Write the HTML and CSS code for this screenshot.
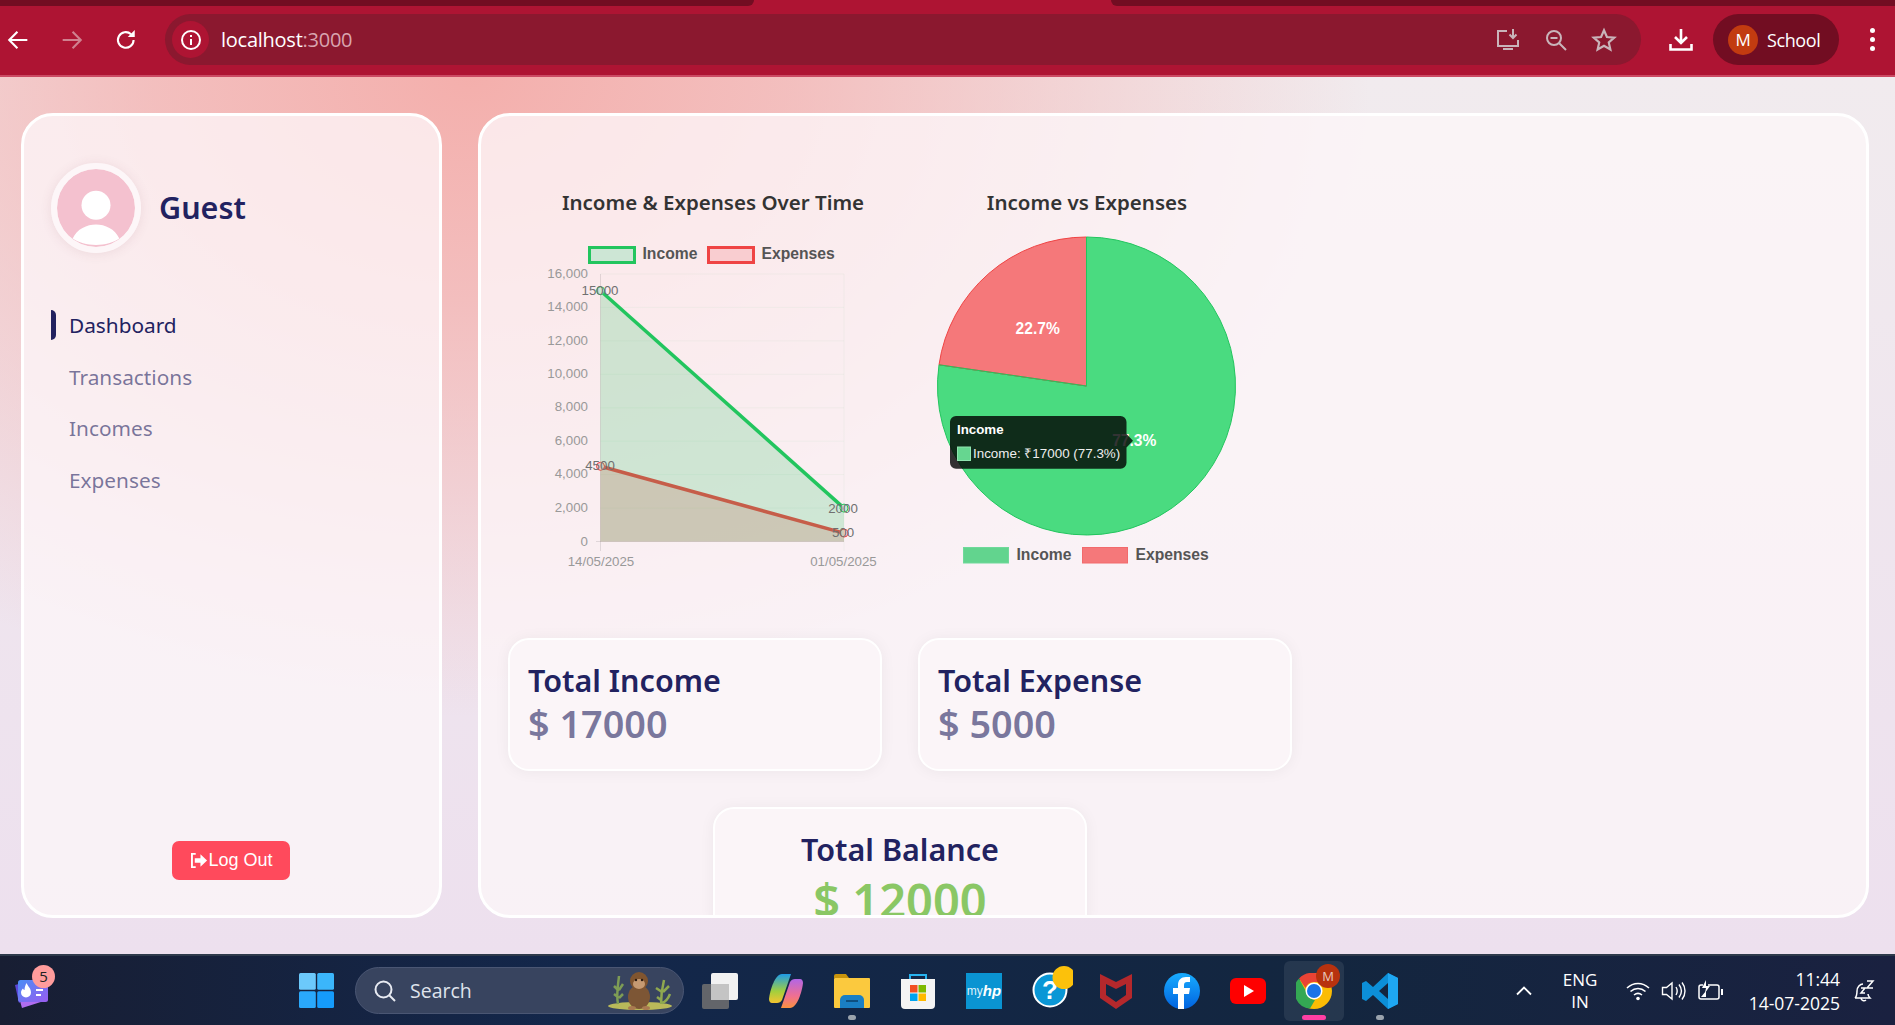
FILE: index.html
```html
<!DOCTYPE html>
<html lang="en">
<head>
    <meta charset="UTF-8">
    <meta name="viewport" content="width=device-width, initial-scale=1.0">
    <title>Dashboard</title>
    <link rel="stylesheet" href="styles.css">
</head>
<body>
    <!-- Browser bar -->
    <div class="tab-strip"><div class="tab-left"></div><div class="tab-right"></div></div>
    <header class="toolbar">
        <svg class="nav-btn" viewBox="0 0 24 24"><path d="M20 12H5M11.500 5L4.500 12l7 7" fill="none" stroke="#fff" stroke-width="1.800"/></svg>
        <svg class="nav-btn" viewBox="0 0 24 24"><path d="M4 12h15M12.500 5l7 7-7 7" fill="none" stroke="#d0808f" stroke-width="1.800"/></svg>
        <svg class="nav-btn" viewBox="0 0 24 24"><path d="M18.500 12a6.700 6.700 0 1 1-2.200-5" fill="none" stroke="#fff" stroke-width="1.800"/><path d="M19.500 3.500v6h-6z" fill="#fff"/></svg>
        <div class="omnibox">
            <span class="site-info">
                <svg viewBox="0 0 24 24" width="24" height="24"><circle cx="12" cy="12" r="9" fill="none" stroke="#fff" stroke-width="2"/><path d="M12 11v6M12 7v2" stroke="#fff" stroke-width="2"/></svg>
            </span>
            <span class="url">localhost<span class="url-port">:3000</span></span>
            <span class="omni-icons">
                <svg viewBox="0 0 26 26" width="26" height="26"><path d="M12 4H3v15h20v-6" fill="none" stroke="#c9b4ba" stroke-width="2"/><path d="M8 21h10v2H8z" fill="#c9b4ba"/><path d="M18 2v8M14.500 7.500l3.500 3.500 3.500-3.500" fill="none" stroke="#c9b4ba" stroke-width="2"/></svg>
                <svg viewBox="0 0 24 24" width="24" height="24"><circle cx="10" cy="10" r="7" fill="none" stroke="#c9b4ba" stroke-width="2"/><path d="M6.500 10h7M15 15l7 7" stroke="#c9b4ba" stroke-width="2"/></svg>
                <svg viewBox="0 0 24 24" width="26" height="26"><path d="M12 3l2.700 6.200 6.800.6-5.100 4.400 1.500 6.600L12 17.300l-5.900 3.500 1.500-6.600-5.100-4.400 6.800-.6z" fill="none" stroke="#c9b4ba" stroke-width="2"/></svg>
            </span>
        </div>
        <svg class="download-btn" viewBox="0 0 24 24"><path d="M12 1v13M6 9l6 6 6-6" fill="none" stroke="#fff" stroke-width="2.600"/><path d="M1.500 16v5.500h21V16" fill="none" stroke="#fff" stroke-width="2.600"/></svg>
        <div class="profile"><span class="profile-pic">M</span><span>School</span></div>
        <div class="menu-dots"><i></i><i></i><i></i></div>
    </header>

    <main class="page">
        <aside class="sidebar">
            <div class="user">
                <div class="avatar">
                    <svg viewBox="0 0 78 78"><circle cx="39" cy="39" r="39" fill="#f4c1cf"/><circle cx="39" cy="36.300" r="14.500" fill="#fff"/><path d="M15.700 69.600C20 60 30 55.600 39 55.600s19 4.400 23.300 14c-6 4-14 6.400-23.300 6.400s-17.300-2.400-23.300-6.400z" fill="#fff"/></svg>
                </div>
                <h2>Guest</h2>
            </div>
            <ul class="menu">
                <li class="active">Dashboard</li>
                <li>Transactions</li>
                <li>Incomes</li>
                <li>Expenses</li>
            </ul>
            <button class="logout">
                <svg viewBox="0 0 20 18" width="19" height="17"><path d="M6 2H2v14h4" fill="none" stroke="#fff" stroke-width="2"/><path d="M5 6.500h6V2.500L18 9l-7 6.500v-4H5z" fill="#fff"/></svg>Log Out
            </button>
        </aside>

        <section class="content">
            <div class="charts">
                <div class="chart-line">
                    <h3>Income &amp; Expenses Over Time</h3>
                    <svg class="chart" viewBox="508 218 410 400" width="410" height="400">
                        <!-- legend -->
                        <rect x="589.500" y="247.500" width="45" height="15" fill="#cde6d5" stroke="#22c55e" stroke-width="3"/>
                        <text class="legend-label" x="642.500" y="259">Income</text>
                        <rect x="708.500" y="247.500" width="45" height="15" fill="#f9cdd0" stroke="#ef4444" stroke-width="3"/>
                        <text class="legend-label" x="761.500" y="259">Expenses</text>
                        <!-- grid -->
                        <path d="M600.500 274H844M600.500 307.400H844M600.500 340.900H844M600.500 374.300H844M600.500 407.800H844M600.500 441.200H844M600.500 474.600H844M600.500 508.100H844M844 274V551" stroke="#7fc79a" stroke-opacity=".08" fill="none"/>
                        <path d="M600.500 274V551M596 541.500H844" stroke="#000" stroke-opacity=".1" fill="none"/>
                        <!-- y axis -->
                        <g class="tick tick-y">
                            <text x="588" y="278">16,000</text>
                            <text x="588" y="311">14,000</text>
                            <text x="588" y="344.500">12,000</text>
                            <text x="588" y="378">10,000</text>
                            <text x="588" y="411">8,000</text>
                            <text x="588" y="445">6,000</text>
                            <text x="588" y="478">4,000</text>
                            <text x="588" y="511.500">2,000</text>
                            <text x="588" y="545.500">0</text>
                        </g>
                        <g class="tick tick-x">
                            <text x="601" y="566">14/05/2025</text>
                            <text x="843.500" y="566">01/05/2025</text>
                        </g>
                        <!-- expenses goes under income -->
                        <path d="M600.500 466.300L844 533.100V541.500H600.500z" fill="#ef4444" fill-opacity=".22"/>
                        <path d="M600.500 466.300L844 533.100" stroke="#ef4444" stroke-width="3.500" fill="none"/>
                        <circle cx="600.500" cy="466.300" r="4" fill="#f9cdd0" stroke="#ef4444" stroke-width="1"/>
                        <circle cx="844" cy="533.100" r="4" fill="#f9cdd0" stroke="#ef4444" stroke-width="1"/>
                        <path d="M600.500 290.700L844 508.100V541.500H600.500z" fill="#22c55e" fill-opacity=".2"/>
                        <path d="M600.500 290.700L844 508.100" stroke="#22c55e" stroke-width="3.500" fill="none"/>
                        <circle cx="600.500" cy="290.700" r="4" fill="#cde6d5" stroke="#22c55e" stroke-width="1"/>
                        <circle cx="844" cy="508.100" r="4" fill="#cde6d5" stroke="#22c55e" stroke-width="1"/>
                        <g class="point-label">
                            <text x="600" y="295">15000</text>
                            <text x="600" y="470">4500</text>
                            <text x="843" y="513">2000</text>
                            <text x="843" y="537">500</text>
                        </g>
                    </svg>
                </div>
                <div class="chart-pie">
                    <h3>Income vs Expenses</h3>
                    <svg class="chart" viewBox="918 218 338 400" width="338" height="400">
                        <path d="M1086.500 386L939 364.800A149 149 0 1 0 1086.500 237z" fill="#4adb80" stroke="#22c55e" stroke-width="1"/>
                        <path d="M1086.500 386V237A149 149 0 0 0 939 364.800z" fill="#f5787a" stroke="#ef4444" stroke-width="1"/>
                        <path d="M1086.500 386L939 364.800" stroke="#22c55e" stroke-width="1"/>
                        <path d="M1086.500 386V237" stroke="#22c55e" stroke-width="1"/>
                        <text class="pie-label" x="1037.700" y="334">22.7%</text>
                        <text class="pie-label" x="1134.300" y="446">77.3%</text>
                        <!-- tooltip -->
                        <path d="M956 416h164.500a6 6 0 0 1 6 6v12l6.500 6.700-6.500 6.700v15.300a6 6 0 0 1-6 6H956a6 6 0 0 1-6-6v-40.700a6 6 0 0 1 6-6z" fill="#000" fill-opacity=".8"/>
                        <text class="tip-title" x="957" y="434">Income</text>
                        <rect x="957.500" y="447" width="13" height="13.500" fill="#66d690" stroke="#8fe3ae"/>
                        <text class="tip-body" x="973" y="458">Income: ₹17000 (77.3%)</text>
                        <!-- legend -->
                        <rect x="963.500" y="547.500" width="45" height="15.500" fill="#62d48e" stroke="#6fd99a"/>
                        <text class="legend-label" x="1016.500" y="559.500">Income</text>
                        <rect x="1082.500" y="547.500" width="45" height="15.500" fill="#f5787a" stroke="#f26a6c"/>
                        <text class="legend-label" x="1135.500" y="559.500">Expenses</text>
                    </svg>
                </div>
            </div>
            <div class="stats">
                <div class="stat-card">
                    <h2>Total Income</h2>
                    <p>$ 17000</p>
                </div>
                <div class="stat-card">
                    <h2>Total Expense</h2>
                    <p>$ 5000</p>
                </div>
                <div class="stat-card balance">
                    <h2>Total Balance</h2>
                    <p>$ 12000</p>
                </div>
            </div>
        </section>
    </main>

    <!-- Windows taskbar -->
    <footer class="taskbar">
        <div class="widget">
            <svg viewBox="0 0 40 40" width="40" height="40">
                <defs><linearGradient id="widgetGrad" x1="0" y1="0" x2="1" y2="1"><stop offset="0" stop-color="#4a8df5"/><stop offset="1" stop-color="#9a5cf0"/></linearGradient></defs>
                <path d="M4 14l22-6 4 8-22 16z" fill="#5a46d8"/>
                <path d="M9 30h24l-22 7z" fill="#b06df0"/>
                <rect x="7" y="9" width="30" height="22" rx="2.500" fill="url(#widgetGrad)"/>
                <path d="M15.500 12c1 3 4.500 5 4.500 9.500a5 5 0 0 1-10 0c0-2 1-3 2-4 .5 1 1 1.500 1.500 1.500 0-3 1-5 2-7z" fill="#fff"/>
                <path d="M25 19h7M25 24h5" stroke="#fff" stroke-width="2"/>
            </svg>
            <span class="widget-badge">5</span>
        </div>
        <svg class="start" viewBox="0 0 35 35" width="35" height="35"><rect width="16.800" height="16.800" rx="1.500" fill="#6cc9fb"/><rect x="18.200" width="16.800" height="16.800" rx="1.500" fill="#3bb6fb"/><rect y="18.200" width="16.800" height="16.800" rx="1.500" fill="#2aa8fb"/><rect x="18.200" y="18.200" width="16.800" height="16.800" rx="1.500" fill="#159bfb"/></svg>
        <div class="search">
            <svg viewBox="0 0 24 24" width="24" height="24"><circle cx="10.500" cy="10.500" r="8" fill="none" stroke="#e8ebf2" stroke-width="2"/><path d="M16 16l6 6" stroke="#e8ebf2" stroke-width="2"/></svg>
            <span class="search-text">Search</span>
            <svg class="search-art" viewBox="0 0 68 42" width="68" height="42">
                <ellipse cx="34" cy="36" rx="32" ry="4" fill="#b9b95a"/>
                <path d="M12 34C10 24 12 16 13 6M8 16l5 5M17 14l-4 6M8 24l5 4M17 24l-4 4" stroke="#7d9c55" stroke-width="2.500" fill="none"/>
                <path d="M55 34c0-9 1-16 3-24M50 18l6 4M63 16l-6 6M51 27l4 3M64 24c-2 5-5 8-8 9" stroke="#8fa84f" stroke-width="2.500" fill="none"/>
                <ellipse cx="33" cy="27" rx="11" ry="12" fill="#7d5635"/>
                <circle cx="33" cy="11" r="9" fill="#80552f"/>
                <ellipse cx="33" cy="14" rx="6" ry="5" fill="#c59a72"/>
                <circle cx="30" cy="10" r="1.200" fill="#2a1a10"/><circle cx="36" cy="10" r="1.200" fill="#2a1a10"/>
                <ellipse cx="26" cy="38" rx="4" ry="2" fill="#a97a50"/><ellipse cx="40" cy="38" rx="4" ry="2" fill="#a97a50"/>
            </svg>
        </div>
        <div class="apps">
            <div class="app">
                <svg viewBox="0 0 36 36" width="36" height="36"><rect x="9" width="27" height="27" rx="2" fill="#f2f2f2"/><rect y="11" width="27" height="25" rx="2" fill="#6e6e6e" fill-opacity=".88"/><rect x="9" y="11" width="18" height="16" fill="#c4c4c4"/></svg>
            </div>
            <div class="app">
                <svg viewBox="0 0 34 36" width="34" height="36">
                    <defs>
                        <linearGradient id="copilotA" x1="0" y1="0" x2="0" y2="1"><stop offset="0" stop-color="#1e9be8"/><stop offset=".6" stop-color="#a3cf3d"/><stop offset="1" stop-color="#f4c430"/></linearGradient>
                        <linearGradient id="copilotB" x1="0" y1="0" x2="0" y2="1"><stop offset="0" stop-color="#b266e6"/><stop offset=".6" stop-color="#f0708f"/><stop offset="1" stop-color="#f9923f"/></linearGradient>
                    </defs>
                    <path d="M13 1h9l-9 26c-1 2-3 3-5 3H3c-2 0-3-2-3-4C1 17 6 1 13 1z" fill="url(#copilotA)"/>
                    <path d="M21 35h-9l9-26c1-2 3-3 5-3h5c2 0 3 2 3 4-1 9-6 25-13 25z" fill="url(#copilotB)"/>
                </svg>
            </div>
            <div class="app dot">
                <svg viewBox="0 0 36 36" width="36" height="36"><path d="M0 3a2 2 0 0 1 2-2h10l3 4H0z" fill="#c8930c"/><rect y="5" width="36" height="30" rx="1" fill="#fbc93e"/><path d="M6 35v-8a5 5 0 0 1 5-5h14a5 5 0 0 1 5 5v8z" fill="#1a7fc4"/><path d="M12 28h12" stroke="#0d4f80" stroke-width="2"/></svg>
            </div>
            <div class="app">
                <svg viewBox="0 0 36 36" width="36" height="36"><path d="M10 6V2h16v4" fill="none" stroke="#28b3ef" stroke-width="2"/><path d="M1 6h34v26a4 4 0 0 1-4 4H5a4 4 0 0 1-4-4z" fill="#f4f4f4"/><rect x="10" y="12" width="7.500" height="7.500" fill="#f25022"/><rect x="18.500" y="12" width="7.500" height="7.500" fill="#7fba00"/><rect x="10" y="20.500" width="7.500" height="7.500" fill="#00a4ef"/><rect x="18.500" y="20.500" width="7.500" height="7.500" fill="#ffb900"/></svg>
            </div>
            <div class="app">
                <div class="myhp"><span>my</span><i>hp</i></div>
            </div>
            <div class="app">
                <svg viewBox="0 -10 46 50" width="46" height="50"><circle cx="23" cy="14" r="16.500" fill="#0a97d6" stroke="#fff" stroke-width="2"/><text class="help-mark" x="23" y="23">?</text><circle cx="37" cy="1.500" r="11.500" fill="#fcc10b"/></svg>
            </div>
            <div class="app">
                <svg viewBox="0 0 32 36" width="32" height="36"><path d="M0 1l16 8 16-8v24l-16 11L0 25zM6 11v11l10 7 10-7V11l-10 5z" fill="#b5282c" fill-rule="evenodd"/></svg>
            </div>
            <div class="app">
                <svg viewBox="0 0 36 36" width="36" height="36"><defs><linearGradient id="fbGrad" x1="0" y1="0" x2="0" y2="1"><stop offset="0" stop-color="#18acfe"/><stop offset="1" stop-color="#0163e0"/></linearGradient></defs><circle cx="18" cy="18" r="18" fill="url(#fbGrad)"/><path d="M20 36V21h5l1-6h-6v-3c0-2 1-3 3-3h3V4h-4c-5 0-8 3-8 8v3h-5v6h5v15z" fill="#fff"/></svg>
            </div>
            <div class="app">
                <svg viewBox="0 0 36 26" width="36" height="26"><rect width="36" height="26" rx="6" fill="#f00"/><path d="M14 7l10 6-10 6z" fill="#fff"/></svg>
            </div>
            <div class="app active">
                <svg viewBox="0 0 36 36" width="36" height="36"><circle cx="18" cy="18" r="18" fill="#fbbc04"/><path d="M18 0a18 18 0 0 1 15.600 9H18a9 9 0 0 0-8.500 6L3 5.500A18 18 0 0 1 18 0z" fill="#ea4335"/><path d="M3 5.500L11 20a9 9 0 0 0 8 7l-5 8.600A18 18 0 0 1 3 5.500z" fill="#34a853"/><circle cx="18" cy="18" r="8.500" fill="#fff"/><circle cx="18" cy="18" r="7" fill="#1a73e8"/></svg>
                <span class="chrome-badge">M</span>
            </div>
            <div class="app dot">
                <svg viewBox="0 0 38 38" width="38" height="38"><path d="M27 1l10 5v26l-10 5-15-14-7 6-4-2V11l4-2 7 6zM27 11l-9 8 9 8z" fill="#0c8fd8" fill-rule="evenodd"/><path d="M27 1l10 5v26l-10 5z" fill="#1ea7f2"/></svg>
            </div>
        </div>
        <div class="tray">
            <svg class="tray-chevron" viewBox="0 0 18 10" width="18" height="10"><path d="M2 8.500l7-7 7 7" fill="none" stroke="#fff" stroke-width="1.800"/></svg>
            <div class="lang">ENG<br>IN</div>
            <svg class="tray-wifi" viewBox="0 0 24 20" width="24" height="20"><path d="M1 7c6.500-6 15.500-6 22 0M4.500 10.500c4.500-4 10.500-4 15 0M8 14c2.500-2 5.500-2 8 0" fill="none" stroke="#fff" stroke-width="1.600"/><circle cx="12" cy="17.500" r="1.800" fill="#fff"/></svg>
            <svg class="tray-sound" viewBox="0 0 26 20" width="26" height="20"><path d="M1.500 6.500h4L11 2v16l-5.500-4.500h-4z" fill="none" stroke="#fff" stroke-width="1.400"/><path d="M15 6c1.500 2.500 1.500 5.500 0 8M18 3.500c3 4 3 9 0 13M21 1.500c4 5 4 12 0 17" fill="none" stroke="#fff" stroke-width="1.400"/></svg>
            <svg class="tray-battery" viewBox="0 0 26 22" width="26" height="22"><path d="M5 5H3a2 2 0 0 0-2 2v10a2 2 0 0 0 2 2h16a2 2 0 0 0 2-2V7a2 2 0 0 0-2-2h-9" fill="none" stroke="#fff" stroke-width="1.500"/><path d="M23 9h2v6h-2z" fill="#fff"/><path d="M8 0L4 8h4l-1 5 5-7H8z" fill="#fff"/><path d="M3 17l5-6v6z" fill="#fff"/></svg>
            <div class="clock"><div>11:44</div><div>14-07-2025</div></div>
            <svg class="tray-bell" viewBox="0 0 24 24" width="24" height="24"><path d="M3 19c2-2 2-4 2-7 0-4 3-7 6-7M3 19h15c-1-1-2-2-2-4M9 19a3 3 0 0 0 5 2" fill="none" stroke="#fff" stroke-width="1.500"/><path d="M9 9h4l-4 5h4M15 2h6l-6 7h6" fill="none" stroke="#fff" stroke-width="1.500"/></svg>
        </div>
    </footer>
</body>
</html>
```
FILE: styles.css
```css
* {
    box-sizing: border-box;
}
html,
body {
    margin: 0;
    padding: 0;
    height: 1025px;
    overflow: hidden;
}
body {
    display: flex;
    flex-direction: column;
    font-family: "Noto Sans", Lato, sans-serif;
    background-color: #f3ebee;
}

/* Browser bar */
.tab-strip {
    height: 6px;
    display: flex;
    justify-content: space-between;
    background-color: #ae1433;
}
.tab-left {
    width: 754px;
    border-bottom-right-radius: 6px;
    background-color: #720d22;
}
.tab-right {
    width: 784px;
    border-bottom-left-radius: 6px;
    background-color: #720d22;
}
.toolbar {
    height: 71px;
    display: flex;
    align-items: center;
    padding: 0 0 2px 4px;
    background-color: #ae1433;
    border-bottom: 2px solid #cb4a63;
}
.nav-btn {
    width: 28px;
    height: 28px;
    margin-right: 26px;
    flex: none;
}
.omnibox {
    width: 1476px;
    height: 51px;
    margin-left: -1px;
    display: flex;
    align-items: center;
    flex: none;
    padding: 0 24px 0 7px;
    border-radius: 26px;
    background-color: #8b182f;
}
.site-info {
    width: 37px;
    height: 37px;
    display: flex;
    align-items: center;
    justify-content: center;
    border-radius: 50%;
    background-color: #ae1433;
}
.url {
    margin-left: 12px;
    font-family: "Open Sans", sans-serif;
    font-size: 20px;
    letter-spacing: -0.25px;
    color: #fff;
}
.url-port {
    color: #d9a5af;
}
.omni-icons {
    margin-left: auto;
    display: flex;
    align-items: center;
    gap: 23px;
}
.download-btn {
    width: 24px;
    height: 24px;
    margin-left: 28px;
    flex: none;
}
.profile {
    width: 126px;
    height: 51px;
    margin-left: 20px;
    display: flex;
    align-items: center;
    flex: none;
    gap: 9px;
    padding-left: 15px;
    border-radius: 26px;
    background-color: #720d22;
    font-family: "Open Sans", sans-serif;
    font-size: 18px;
    letter-spacing: -0.4px;
    color: #fff;
}
.profile-pic {
    width: 30px;
    height: 30px;
    display: flex;
    align-items: center;
    justify-content: center;
    border-radius: 50%;
    background-color: #c23b10;
    font-size: 17px;
}
.menu-dots {
    width: 24px;
    margin-left: 21px;
    display: flex;
    flex-direction: column;
    align-items: center;
    gap: 4px;
}
.menu-dots i {
    width: 5px;
    height: 5px;
    border-radius: 50%;
    background-color: #fff;
}

/* Page */
.page {
    height: 877px;
    flex: none;
    display: flex;
    gap: 36px;
    padding: 36px 26px 36px 21px;
    background:
        radial-gradient(ellipse 900px 640px at 470px 0, #f4afac 0%, rgba(244, 176, 174, 0.75) 35%, rgba(244, 176, 174, 0) 100%),
        linear-gradient(180deg, #f1ebee 0%, #ede0ee 100%);
}
.sidebar,
.content {
    border: 3px solid #fff;
    border-radius: 32px;
    background-color: rgba(252, 246, 249, 0.78);
}
.sidebar {
    width: 421px;
    flex: none;
    display: flex;
    flex-direction: column;
    padding: 47px 27px 35px;
}
.user {
    display: flex;
    align-items: center;
    gap: 18px;
}
.avatar {
    width: 90px;
    height: 90px;
    flex: none;
    border: 6px solid #fdf6f8;
    border-radius: 50%;
    overflow: hidden;
    box-shadow: 0 1px 12px rgba(120, 60, 80, 0.1);
}
.avatar svg {
    display: block;
    width: 78px;
    height: 78px;
}
.user h2 {
    margin: 0 0 2px;
    font-size: 30.500px;
    font-weight: 600;
    color: #222260;
}
.menu {
    list-style: none;
    margin: 47px 0 0;
    padding: 0;
    font-size: 20.800px;
    color: rgba(34, 34, 96, 0.6);
}
.menu li {
    position: relative;
    height: 51.500px;
    line-height: 51.500px;
    padding-left: 18px;
}
.menu li.active {
    color: #222260;
}
.menu li.active::before {
    content: "";
    position: absolute;
    left: 0;
    top: 10px;
    width: 5px;
    height: 30px;
    border-radius: 0 5px 5px 0;
    background-color: #222260;
}
.logout {
    display: flex;
    align-items: center;
    align-self: center;
    width: 118px;
    height: 39px;
    margin: auto 2px 0 0;
    padding: 0 0 0 18px;
    border: none;
    border-radius: 7px;
    background-color: #ff4a5c;
    font-family: "Liberation Sans", Arial, sans-serif;
    font-size: 18px;
    color: #fff;
}

/* Charts */
.content {
    flex: 1;
    padding: 71px 27px 0;
    overflow: hidden;
}
.charts {
    display: flex;
}
.chart-line {
    width: 410px;
}
.chart-pie {
    width: 338px;
}
.charts h3 {
    height: 31px;
    margin: 0;
    line-height: 30px;
    text-align: center;
    font-size: 20.500px;
    font-weight: 600;
    color: #333;
}
.chart {
    display: block;
    font-family: "Liberation Sans", Arial, sans-serif;
}
.legend-label {
    font-size: 15.700px;
    font-weight: 700;
    fill: #555;
}
.tick {
    font-size: 13.300px;
    fill: #999;
}
.tick-y {
    text-anchor: end;
}
.tick-x {
    text-anchor: middle;
}
.point-label {
    font-size: 13.300px;
    fill: #707070;
    text-anchor: middle;
}
.pie-label {
    font-size: 15.600px;
    font-weight: 700;
    fill: #fff;
    text-anchor: middle;
}
.tip-title {
    font-size: 13.300px;
    font-weight: 700;
    fill: #fff;
}
.tip-body {
    font-size: 13.400px;
    fill: #eee;
}

/* Totals */
.stats {
    display: grid;
    grid-template-columns: 374px 374px;
    gap: 36px;
    width: 784px;
    margin-top: 20px;
}
.stat-card {
    height: 133px;
    display: flex;
    flex-direction: column;
    justify-content: center;
    padding: 0 18px 3px;
    border: 2px solid #fff;
    border-radius: 21px;
    background-color: #fbf5f8;
    box-shadow: 0 1px 15px rgba(0, 0, 0, 0.05);
}
.stat-card h2 {
    margin: 0;
    font-size: 30.500px;
    font-weight: 600;
    line-height: 42px;
    color: #222260;
}
.stat-card p {
    margin: 0;
    font-size: 37.800px;
    font-weight: 600;
    line-height: 46px;
    color: rgba(34, 34, 96, 0.6);
}
.stat-card.balance {
    grid-column: 1 / 3;
    justify-self: center;
    justify-content: flex-start;
    width: 374px;
    padding-top: 19px;
    text-align: center;
}
.stat-card.balance p {
    font-size: 47px;
    line-height: 60px;
    color: #8ac765;
}

/* Taskbar */
.taskbar {
    height: 71px;
    flex: none;
    display: flex;
    align-items: center;
    border-top: 2px solid #2e3a4b;
    background: linear-gradient(90deg, #181e33 0%, #13274b 30%, #13263f 70%, #1a2140 100%);
    color: #fff;
    font-family: "Open Sans", sans-serif;
}
.widget {
    position: relative;
    width: 40px;
    height: 40px;
    margin-left: 11px;
    flex: none;
}
.widget-badge {
    position: absolute;
    left: 21px;
    top: -6px;
    width: 23px;
    height: 23px;
    border-radius: 50%;
    background-color: #ff9c9c;
    color: #222;
    font-size: 15px;
    line-height: 23px;
    text-align: center;
}
.start {
    margin-left: 248px;
    flex: none;
}
.search {
    width: 329px;
    height: 47px;
    margin-left: 21px;
    display: flex;
    align-items: center;
    flex: none;
    padding: 0 9px 0 17px;
    border: 1px solid #4a5673;
    border-radius: 24px;
    background-color: #38445f;
}
.search-text {
    margin-left: 13px;
    font-size: 19.500px;
    color: #dfe3ec;
}
.search-art {
    margin-left: auto;
}
.apps {
    margin-left: 3px;
    display: flex;
    flex: none;
}
.app {
    position: relative;
    width: 66px;
    height: 60px;
    display: flex;
    align-items: center;
    justify-content: center;
}
.app.dot::after {
    content: "";
    position: absolute;
    left: 29px;
    bottom: 1px;
    width: 8px;
    height: 5px;
    border-radius: 3px;
    background-color: #9aa3ad;
}
.app.active {
    width: 60px;
    margin: 0 3px;
    border-radius: 6px;
    background-color: rgba(255, 255, 255, 0.08);
}
.app.active::after {
    content: "";
    position: absolute;
    left: 18px;
    bottom: 1px;
    width: 24px;
    height: 5px;
    border-radius: 3px;
    background-color: #ff3fa4;
}
.chrome-badge {
    position: absolute;
    right: 4px;
    top: 3px;
    width: 24px;
    height: 24px;
    border-radius: 50%;
    background-color: #b8320e;
    color: #e9c9bd;
    font-size: 13px;
    line-height: 24px;
    text-align: center;
}
.myhp {
    width: 36px;
    height: 36px;
    display: flex;
    align-items: center;
    justify-content: center;
    background-color: #0a94d2;
    font-family: "Liberation Sans", Arial, sans-serif;
    font-size: 12px;
    color: #dff2fb;
}
.myhp i {
    font-weight: 700;
    font-size: 15px;
    color: #fff;
}
.help-mark {
    font-family: "Liberation Sans", Arial, sans-serif;
    font-size: 26px;
    font-weight: 700;
    fill: #fff;
    text-anchor: middle;
}
.tray {
    display: flex;
    align-items: center;
    flex: none;
    font-size: 17px;
}
.tray-chevron {
    margin-left: 102px;
}
.lang {
    width: 60px;
    margin-left: 17px;
    text-align: center;
    line-height: 22px;
}
.tray-wifi {
    margin-left: 16px;
}
.tray-sound {
    margin-left: 11px;
}
.tray-battery {
    margin-left: 11px;
}
.clock {
    width: 110px;
    margin-left: 6px;
    font-size: 17.500px;
    text-align: right;
    line-height: 24px;
}
.tray-bell {
    margin-left: 12px;
}
```
